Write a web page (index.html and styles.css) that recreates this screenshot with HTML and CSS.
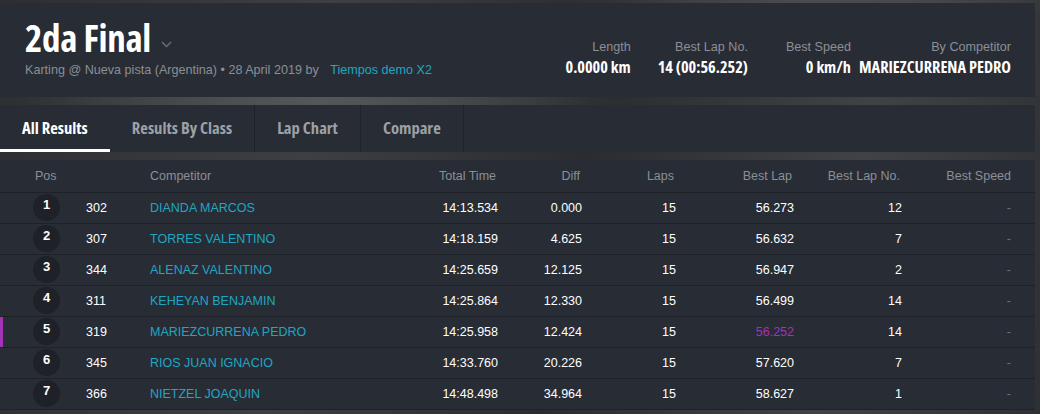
FILE: index.html
```html
<!DOCTYPE html>
<html lang="en">
<head>
    <meta charset="UTF-8">
    <title>2da Final - Results</title>
    <link rel="stylesheet" href="styles.css">
</head>
<body>
    <div class="page">
        <header class="session">
            <div class="session-info">
                <h1 class="title">2da Final <span class="chevron"><svg width="11" height="7" viewBox="0 0 11 7"><path d="M1 1l4.5 4.5L10 1" fill="none" stroke="#6b7078" stroke-width="1.4"/></svg></span></h1>
                <p class="meta">Karting @ Nueva pista (Argentina) &bull; 28 April 2019 by <a class="link" href="#">Tiempos demo X2</a></p>
            </div>
            <div class="stats">
                <div class="stat stat-length">
                    <span class="stat-label">Length</span>
                    <span class="stat-value">0.0000 km</span>
                </div>
                <div class="stat stat-lap">
                    <span class="stat-label">Best Lap No.</span>
                    <span class="stat-value">14 (00:56.252)</span>
                </div>
                <div class="stat stat-speed">
                    <span class="stat-label">Best Speed</span>
                    <span class="stat-value">0 km/h</span>
                </div>
                <div class="stat stat-by">
                    <span class="stat-label">By Competitor</span>
                    <span class="stat-value">MARIEZCURRENA PEDRO</span>
                </div>
            </div>
        </header>

        <nav class="tabs">
            <a class="tab active" href="#">All Results</a>
            <a class="tab" href="#">Results By Class</a>
            <a class="tab" href="#">Lap Chart</a>
            <a class="tab" href="#">Compare</a>
        </nav>

        <table class="results">
            <colgroup>
                <col style="width:75px">
                <col style="width:45px">
                <col style="width:280px">
                <col style="width:110px">
                <col style="width:84px">
                <col style="width:94px">
                <col style="width:118px">
                <col style="width:108px">
                <col style="width:121px">
            </colgroup>
            <thead>
                <tr>
                    <th class="c-pos">Pos</th>
                    <th></th>
                    <th class="c-name">Competitor</th>
                    <th class="num">Total Time</th>
                    <th class="num">Diff</th>
                    <th class="num">Laps</th>
                    <th class="num">Best Lap</th>
                    <th class="num">Best Lap No.</th>
                    <th class="num last">Best Speed</th>
                </tr>
            </thead>
            <tbody>
                <tr>
                    <td class="c-pos"><span class="pos">1</span></td>
                    <td class="c-no">302</td>
                    <td class="c-name"><a href="#">DIANDA MARCOS</a></td>
                    <td class="num">14:13.534</td>
                    <td class="num">0.000</td>
                    <td class="num">15</td>
                    <td class="num">56.273</td>
                    <td class="num">12</td>
                    <td class="num last dash">-</td>
                </tr>
                <tr>
                    <td class="c-pos"><span class="pos">2</span></td>
                    <td class="c-no">307</td>
                    <td class="c-name"><a href="#">TORRES VALENTINO</a></td>
                    <td class="num">14:18.159</td>
                    <td class="num">4.625</td>
                    <td class="num">15</td>
                    <td class="num">56.632</td>
                    <td class="num">7</td>
                    <td class="num last dash">-</td>
                </tr>
                <tr>
                    <td class="c-pos"><span class="pos">3</span></td>
                    <td class="c-no">344</td>
                    <td class="c-name"><a href="#">ALENAZ VALENTINO</a></td>
                    <td class="num">14:25.659</td>
                    <td class="num">12.125</td>
                    <td class="num">15</td>
                    <td class="num">56.947</td>
                    <td class="num">2</td>
                    <td class="num last dash">-</td>
                </tr>
                <tr>
                    <td class="c-pos"><span class="pos">4</span></td>
                    <td class="c-no">311</td>
                    <td class="c-name"><a href="#">KEHEYAN BENJAMIN</a></td>
                    <td class="num">14:25.864</td>
                    <td class="num">12.330</td>
                    <td class="num">15</td>
                    <td class="num">56.499</td>
                    <td class="num">14</td>
                    <td class="num last dash">-</td>
                </tr>
                <tr class="best">
                    <td class="c-pos"><span class="pos">5</span></td>
                    <td class="c-no">319</td>
                    <td class="c-name"><a href="#">MARIEZCURRENA PEDRO</a></td>
                    <td class="num">14:25.958</td>
                    <td class="num">12.424</td>
                    <td class="num">15</td>
                    <td class="num fastest">56.252</td>
                    <td class="num">14</td>
                    <td class="num last dash">-</td>
                </tr>
                <tr>
                    <td class="c-pos"><span class="pos">6</span></td>
                    <td class="c-no">345</td>
                    <td class="c-name"><a href="#">RIOS JUAN IGNACIO</a></td>
                    <td class="num">14:33.760</td>
                    <td class="num">20.226</td>
                    <td class="num">15</td>
                    <td class="num">57.620</td>
                    <td class="num">7</td>
                    <td class="num last dash">-</td>
                </tr>
                <tr>
                    <td class="c-pos"><span class="pos">7</span></td>
                    <td class="c-no">366</td>
                    <td class="c-name"><a href="#">NIETZEL JOAQUIN</a></td>
                    <td class="num">14:48.498</td>
                    <td class="num">34.964</td>
                    <td class="num">15</td>
                    <td class="num">58.627</td>
                    <td class="num">1</td>
                    <td class="num last dash">-</td>
                </tr>
            </tbody>
        </table>
    </div>
</body>
</html>
```

FILE: styles.css
```css
* {
    box-sizing: border-box;
}

body {
    margin: 0;
    height: 414px;
    overflow: hidden;
    font-family: "Liberation Sans", Arial, sans-serif;
    color: #fff;
    background:
        radial-gradient(ellipse 300px 40px at 320px 100px, #55575b, transparent),
        radial-gradient(ellipse 260px 30px at 820px 0px, #4a4c50, transparent),
        linear-gradient(100deg, #2c2e32 0%, #3d3f43 30%, #2a2c30 55%, #404246 80%, #2e3034 100%);
}

a {
    text-decoration: none;
}

.page {
    width: 1035px;
    padding-top: 3px;
}

/* Header */
.session {
    display: flex;
    justify-content: space-between;
    height: 94px;
    padding: 11px 24px 0 25px;
    background: #282c35;
}

.title {
    margin: 0;
    font-family: "Open Sans", "DejaVu Sans Condensed", sans-serif;
    font-stretch: 75%;
    font-size: 37px;
    font-weight: 700;
    line-height: 40px;
    letter-spacing: -0.3px;
}

.chevron {
    display: inline-block;
    margin-left: 4px;
    vertical-align: 4px;
}

.meta {
    margin: 5px 0 0;
    font-size: 12.6px;
    color: #8b8f96;
}

.link {
    margin-left: 8px;
    color: #1fa6c2;
}

.stats {
    display: flex;
    padding-top: 26px;
}

.stat {
    display: flex;
    flex-direction: column;
    align-items: flex-end;
    gap: 2px;
}

.stat-lap { margin-left: 27px; }
.stat-speed { margin-left: 38px; }
.stat-by { margin-left: 8px; }

.stat-label {
    font-size: 12.6px;
    color: #8b8f96;
}

.stat-value {
    font-family: "Open Sans", "DejaVu Sans Condensed", sans-serif;
    font-stretch: 75%;
    font-size: 16.3px;
    font-weight: 700;
}

/* Tabs */
.tabs {
    display: flex;
    height: 47px;
    margin-top: 8px;
    background: #282c35;
}

.tab {
    display: flex;
    align-items: center;
    padding: 0 22px 3px;
    font-family: "Open Sans", "DejaVu Sans Condensed", sans-serif;
    font-stretch: 75%;
    font-size: 16.6px;
    font-weight: 700;
    color: #9da1a7;
    border-right: 1px solid #1f2229;
}

.tab.active {
    color: #fff;
    border-right: none;
    box-shadow: inset 0 -3px 0 #fff;
}

/* Results table */
.results {
    width: 1035px;
    margin-top: 8px;
    table-layout: fixed;
    border-collapse: collapse;
    font-size: 12.5px;
}

.results th {
    height: 32px;
    padding: 0 14px 0 0;
    font-weight: 400;
    font-size: 12.5px;
    color: #8b8f96;
    text-align: left;
    background: #282c35;
    border-bottom: 1px solid #1e2128;
}

.results td {
    height: 31px;
    padding: 0 12px 0 0;
    background: #282c35;
    border-bottom: 1px solid #1e2128;
    vertical-align: middle;
}

.results th.c-pos {
    padding-left: 35px;
}

.results th.c-name,
.results td.c-name {
    padding-left: 30px;
}

.results .num {
    text-align: right;
}

.results .last {
    padding-right: 24px;
}

.results td.c-pos {
    padding-left: 33px;
}

.pos {
    display: flex;
    justify-content: center;
    width: 27px;
    height: 27px;
    padding-top: 3px;
    border-radius: 50%;
    background: #1e2128;
    font-weight: 700;
    font-size: 13px;
}

.results td.c-no {
    padding-left: 11px;
}

.c-name a {
    color: #1fa6c2;
}

.dash {
    color: #6d7178;
}

.best td:first-child {
    box-shadow: inset 3px 0 0 #a233b4;
}

.fastest {
    color: #a233b4;
}
```
